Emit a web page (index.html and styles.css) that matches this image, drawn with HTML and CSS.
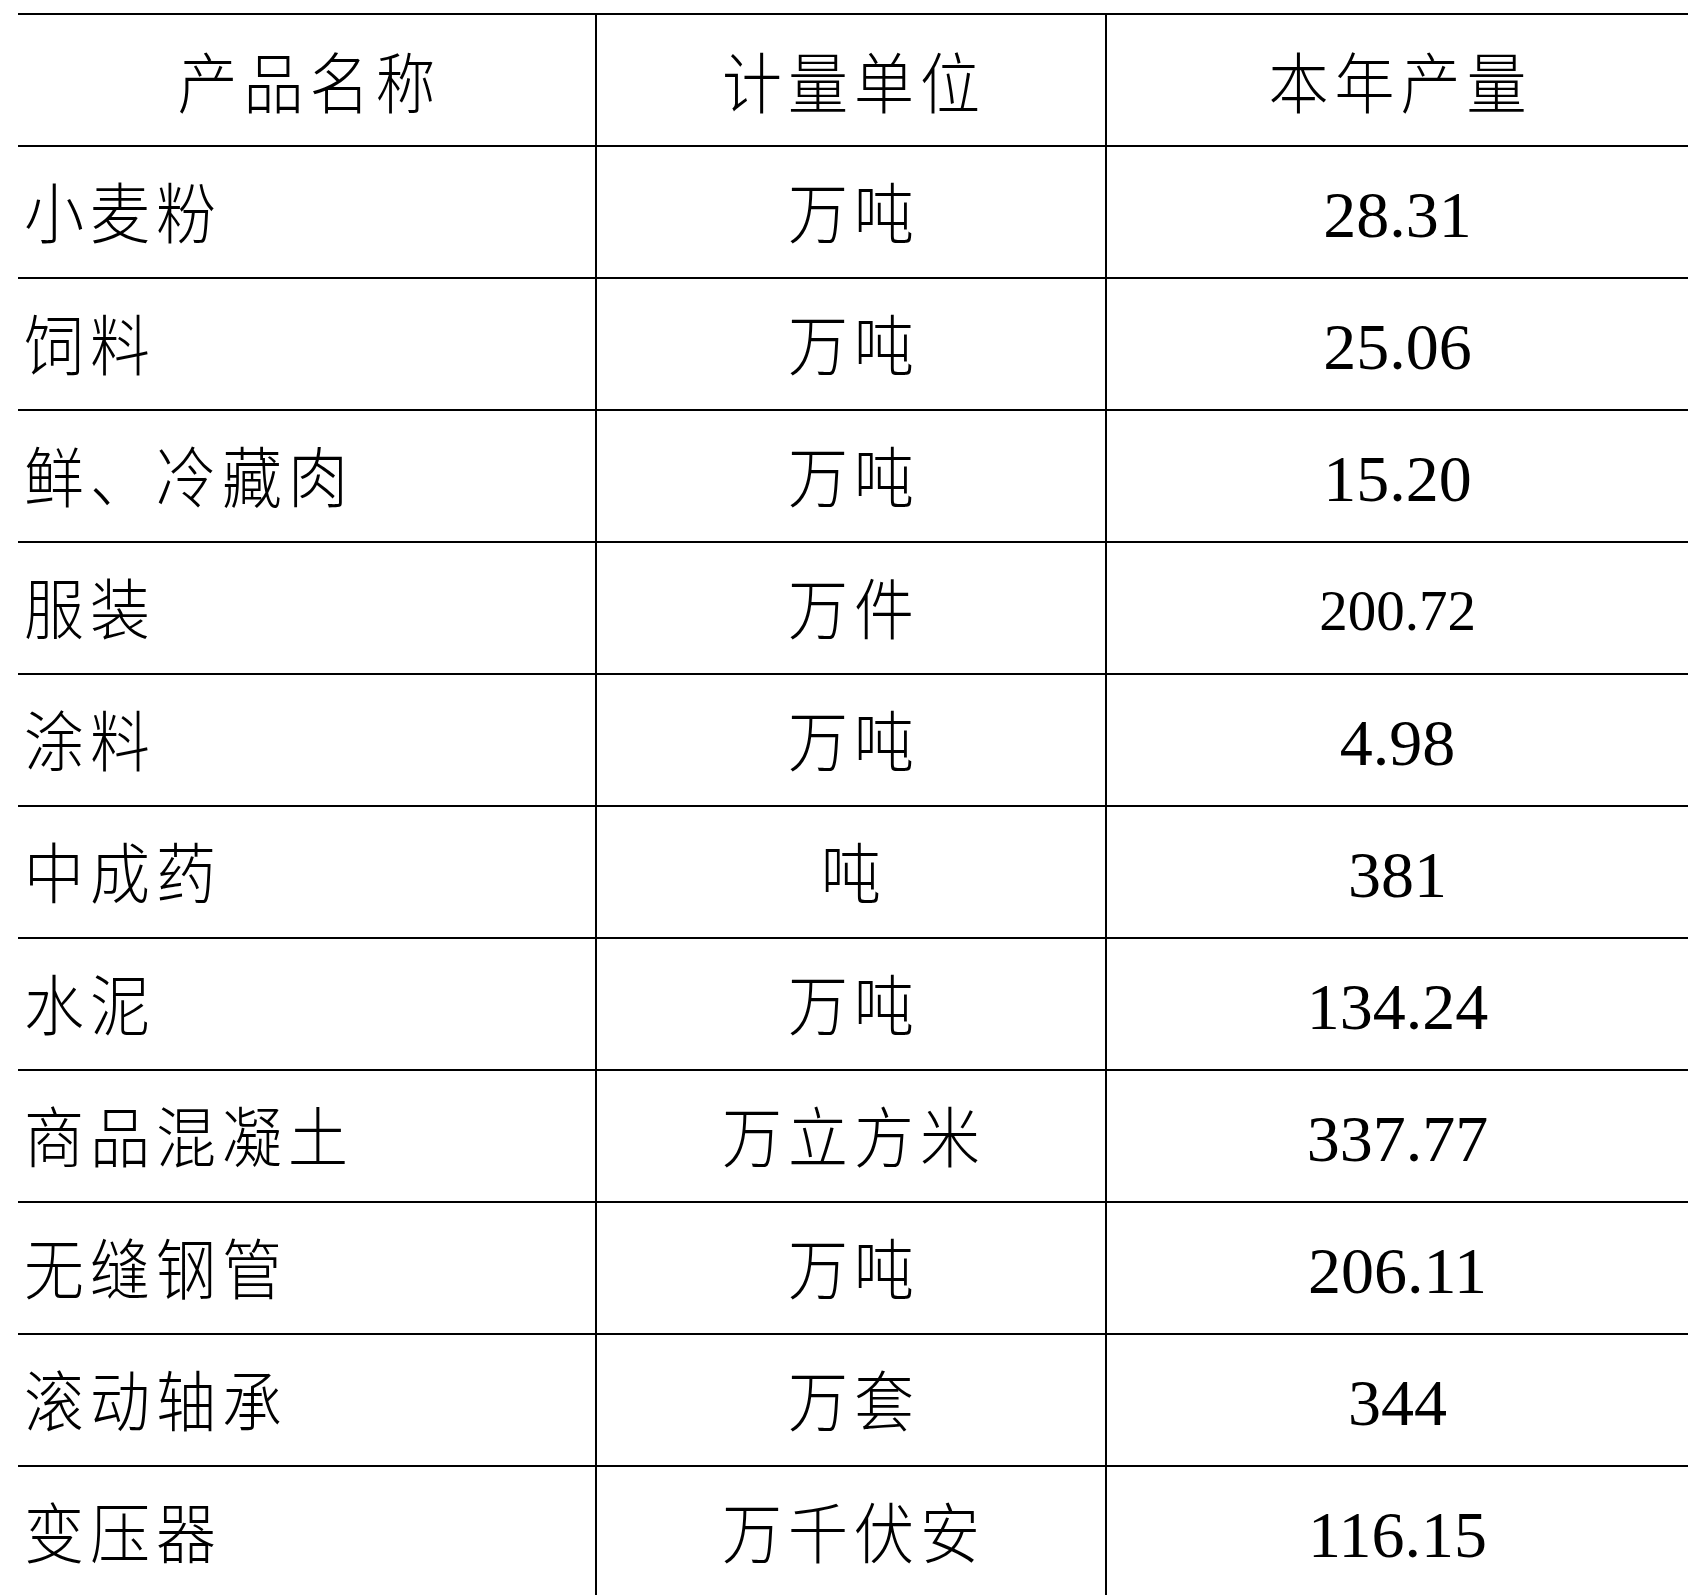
FILE: index.html
```html
<!DOCTYPE html>
<html lang="zh-CN">
<head>
<meta charset="utf-8">
<title>主要工业产品产量</title>
<link rel="stylesheet" href="styles.css">
</head>
<body>
<div class="prod" role="table">
  <div class="row head" role="row">
    <div class="cell cn hd" role="columnheader"><span class="t">产品名称</span></div>
    <div class="cell cn hd mid" role="columnheader"><span class="t">计量单位</span></div>
    <div class="cell cn hd last" role="columnheader"><span class="t">本年产量</span></div>
  </div>
  <div class="row" role="row"><div class="cell cn name" role="cell"><span class="t">小麦粉</span></div><div class="cell cn unit mid" role="cell"><span class="t">万吨</span></div><div class="cell num last" role="cell">28.31</div></div>
  <div class="row" role="row"><div class="cell cn name" role="cell"><span class="t">饲料</span></div><div class="cell cn unit mid" role="cell"><span class="t">万吨</span></div><div class="cell num last" role="cell">25.06</div></div>
  <div class="row" role="row"><div class="cell cn name" role="cell"><span class="t">鲜、冷藏肉</span></div><div class="cell cn unit mid" role="cell"><span class="t">万吨</span></div><div class="cell num last" role="cell">15.20</div></div>
  <div class="row" role="row"><div class="cell cn name" role="cell"><span class="t">服装</span></div><div class="cell cn unit mid" role="cell"><span class="t">万件</span></div><div class="cell num small last" role="cell">200.72</div></div>
  <div class="row" role="row"><div class="cell cn name" role="cell"><span class="t">涂料</span></div><div class="cell cn unit mid" role="cell"><span class="t">万吨</span></div><div class="cell num last" role="cell">4.98</div></div>
  <div class="row" role="row"><div class="cell cn name" role="cell"><span class="t">中成药</span></div><div class="cell cn unit mid" role="cell"><span class="t">吨</span></div><div class="cell num last" role="cell">381</div></div>
  <div class="row" role="row"><div class="cell cn name" role="cell"><span class="t">水泥</span></div><div class="cell cn unit mid" role="cell"><span class="t">万吨</span></div><div class="cell num last" role="cell">134.24</div></div>
  <div class="row" role="row"><div class="cell cn name" role="cell"><span class="t">商品混凝土</span></div><div class="cell cn unit mid" role="cell"><span class="t">万立方米</span></div><div class="cell num last" role="cell">337.77</div></div>
  <div class="row" role="row"><div class="cell cn name" role="cell"><span class="t">无缝钢管</span></div><div class="cell cn unit mid" role="cell"><span class="t">万吨</span></div><div class="cell num last" role="cell">206.11</div></div>
  <div class="row" role="row"><div class="cell cn name" role="cell"><span class="t">滚动轴承</span></div><div class="cell cn unit mid" role="cell"><span class="t">万套</span></div><div class="cell num last" role="cell">344</div></div>
  <div class="row" role="row"><div class="cell cn name" role="cell"><span class="t">变压器</span></div><div class="cell cn unit mid" role="cell"><span class="t">万千伏安</span></div><div class="cell num last" role="cell">116.15</div></div>
</div>
</body>
</html>
```
FILE: styles.css
```css
html, body {
  margin: 0;
  padding: 0;
  background: #ffffff;
}

body {
  padding: 13px 0 0 18px;
  color: #000000;
  font-family: "Liberation Serif", "Noto Sans CJK SC", serif;
}

.prod {
  width: 1670px;
  display: grid;
  grid-template-columns: 577px 510px 583px;
  grid-auto-rows: 132px;
}

.row {
  display: contents;
}

.cell {
  box-sizing: border-box;
  height: 132px;
  border-top: 2px solid #000;
  display: flex;
  align-items: center;
  justify-content: center;
  line-height: 1;
  white-space: nowrap;
}

.mid,
.last {
  border-left: 2px solid #000;
}

.cn {
  font-family: "Noto Sans CJK SC", sans-serif;
  font-weight: 300;
  font-size: 60px;
  letter-spacing: 6px;
  padding-bottom: 6px;
}

.t {
  display: inline-block;
  transform: scaleY(1.1);
}

.hd {
  padding-left: 6px;
  padding-bottom: 3px;
}

.name {
  justify-content: flex-start;
  padding-left: 6px;
}

.unit {
  padding-left: 6px;
}

.num {
  font-size: 66px;
  font-weight: 400;
  padding-top: 5px;
}

.num.small {
  font-size: 57px;
}
```
